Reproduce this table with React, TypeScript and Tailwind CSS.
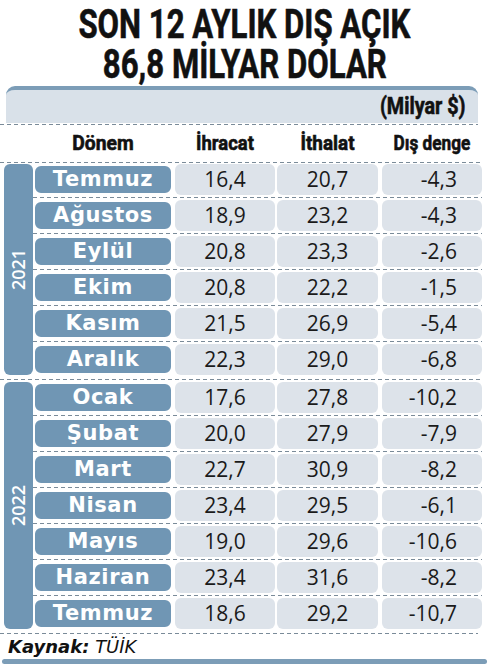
const rows2021 = [
  ["Temmuz", "16,4", "20,7", "-4,3"],
  ["Ağustos", "18,9", "23,2", "-4,3"],
  ["Eylül", "20,8", "23,3", "-2,6"],
  ["Ekim", "20,8", "22,2", "-1,5"],
  ["Kasım", "21,5", "26,9", "-5,4"],
  ["Aralık", "22,3", "29,0", "-6,8"],
];

const rows2022 = [
  ["Ocak", "17,6", "27,8", "-10,2"],
  ["Şubat", "20,0", "27,9", "-7,9"],
  ["Mart", "22,7", "30,9", "-8,2"],
  ["Nisan", "23,4", "29,5", "-6,1"],
  ["Mayıs", "19,0", "29,6", "-10,6"],
  ["Haziran", "23,4", "31,6", "-8,2"],
  ["Temmuz", "18,6", "29,2", "-10,7"],
];

function Dash({ className = "" }: { className?: string }) {
  return (
    <div
      className={`h-px bg-[repeating-linear-gradient(90deg,#7a8b99_0_4px,transparent_4px_7px)] ${className}`}
    />
  );
}

function Row({ r }: { r: string[] }) {
  return (
    <div className="flex h-[31px]">
      <div className="w-[140px] rounded-[8px] border-2 border-white bg-[#7096b4] text-center text-[21px] leading-[27px] font-bold tracking-[0.6px] text-white font-['DejaVu_Sans',sans-serif]">
        {r[0]}
      </div>
      {/* values */}
      <div className="ml-[2px] w-[100px] rounded-[6px] bg-[#dde3ea] text-center text-[21px] leading-[31px] text-[#1a1a1a] font-['Open_Sans',sans-serif]">
        {r[1]}
      </div>
      <div className="ml-[2px] w-[101px] rounded-[6px] bg-[#dde3ea] text-center text-[21px] leading-[31px] text-[#1a1a1a] font-['Open_Sans',sans-serif]">
        {r[2]}
      </div>
      <div className="ml-[4px] w-[100px] rounded-[6px] bg-[#dde3ea] pr-[25px] text-right text-[21px] leading-[31px] text-[#1a1a1a] font-['Open_Sans',sans-serif]">
        {r[3]}
      </div>
    </div>
  );
}

function Group({ year, rows }: { year: string; rows: string[][] }) {
  return (
    <div className="flex">
      <div className="ml-[4px] flex w-[29px] items-center justify-center rounded-[6px] bg-[#7096b4]">
        <span className="-rotate-90 whitespace-nowrap text-[18px] font-semibold text-white font-['Open_Sans',sans-serif]">
          {year}
        </span>
      </div>
      <div className="flex flex-col">
        {rows.map((r, i) => (
          <div key={r[0] + i}>
            {i > 0 && <Dash className="my-[2px]" />}
            <Row r={r} />
          </div>
        ))}
      </div>
    </div>
  );
}

export default function App() {
  const head =
    "font-['Roboto',sans-serif] font-bold text-[#111] whitespace-nowrap [-webkit-text-stroke:0.6px_#111]";
  return (
    <div className="h-[670px] w-[489px] overflow-hidden bg-white">
      {/* Title */}
      <h1 className={`flex flex-col items-center pt-[4px] text-[41px] leading-[40px] ${head}`}>
        <span className="block scale-x-[0.76]">SON 12 AYLIK DIŞ AÇIK</span>
        <span className="block scale-x-[0.76]">86,8 MİLYAR DOLAR</span>
      </h1>

      {/* Unit band */}
      <div className="ml-[6px] mt-[2px] flex h-[37px] w-[472px] items-end justify-end rounded-t-[9px] border-t-[4px] border-[#7c9db7] bg-[#d9e1e9] pb-[3px] pr-[13px]">
        <span className={`origin-right scale-x-[0.86] text-[23px] leading-[26px] ${head}`}>(Milyar $)</span>
      </div>
      <Dash className="mt-[1px] w-[478px]" />

      {/* Column headers */}
      <div className={`flex h-[37px] items-center pl-[33px] text-[21px] ${head}`}>
        <div className="w-[140px] scale-x-[0.92] text-center">Dönem</div>
        <div className="ml-[2px] w-[100px] scale-x-[0.88] text-center">İhracat</div>
        <div className="ml-[2px] w-[101px] scale-x-[0.9] text-center">İthalat</div>
        <div className="ml-[4px] w-[100px] scale-x-[0.82] text-center">Dış denge</div>
      </div>
      <Dash className="w-[482px]" />

      {/* Table body */}
      <div className="mt-[1px]">
        <Group year="2021" rows={rows2021} />
      </div>
      <Dash className="mb-[2px] mt-[4px] w-[482px]" />
      <Group year="2022" rows={rows2022} />
      <Dash className="mt-[4px] w-[478px]" />

      {/* Source */}
      <div className="pl-[8px] pt-[2px] text-[18px] leading-[22px] italic text-[#111] font-['DejaVu_Sans',sans-serif]">
        <span className="font-bold">Kaynak:</span> TÜİK
      </div>
      <div className="mx-[2px] mt-[1px] h-[5px] rounded-full bg-[#7c9db7]" />
    </div>
  );
}
